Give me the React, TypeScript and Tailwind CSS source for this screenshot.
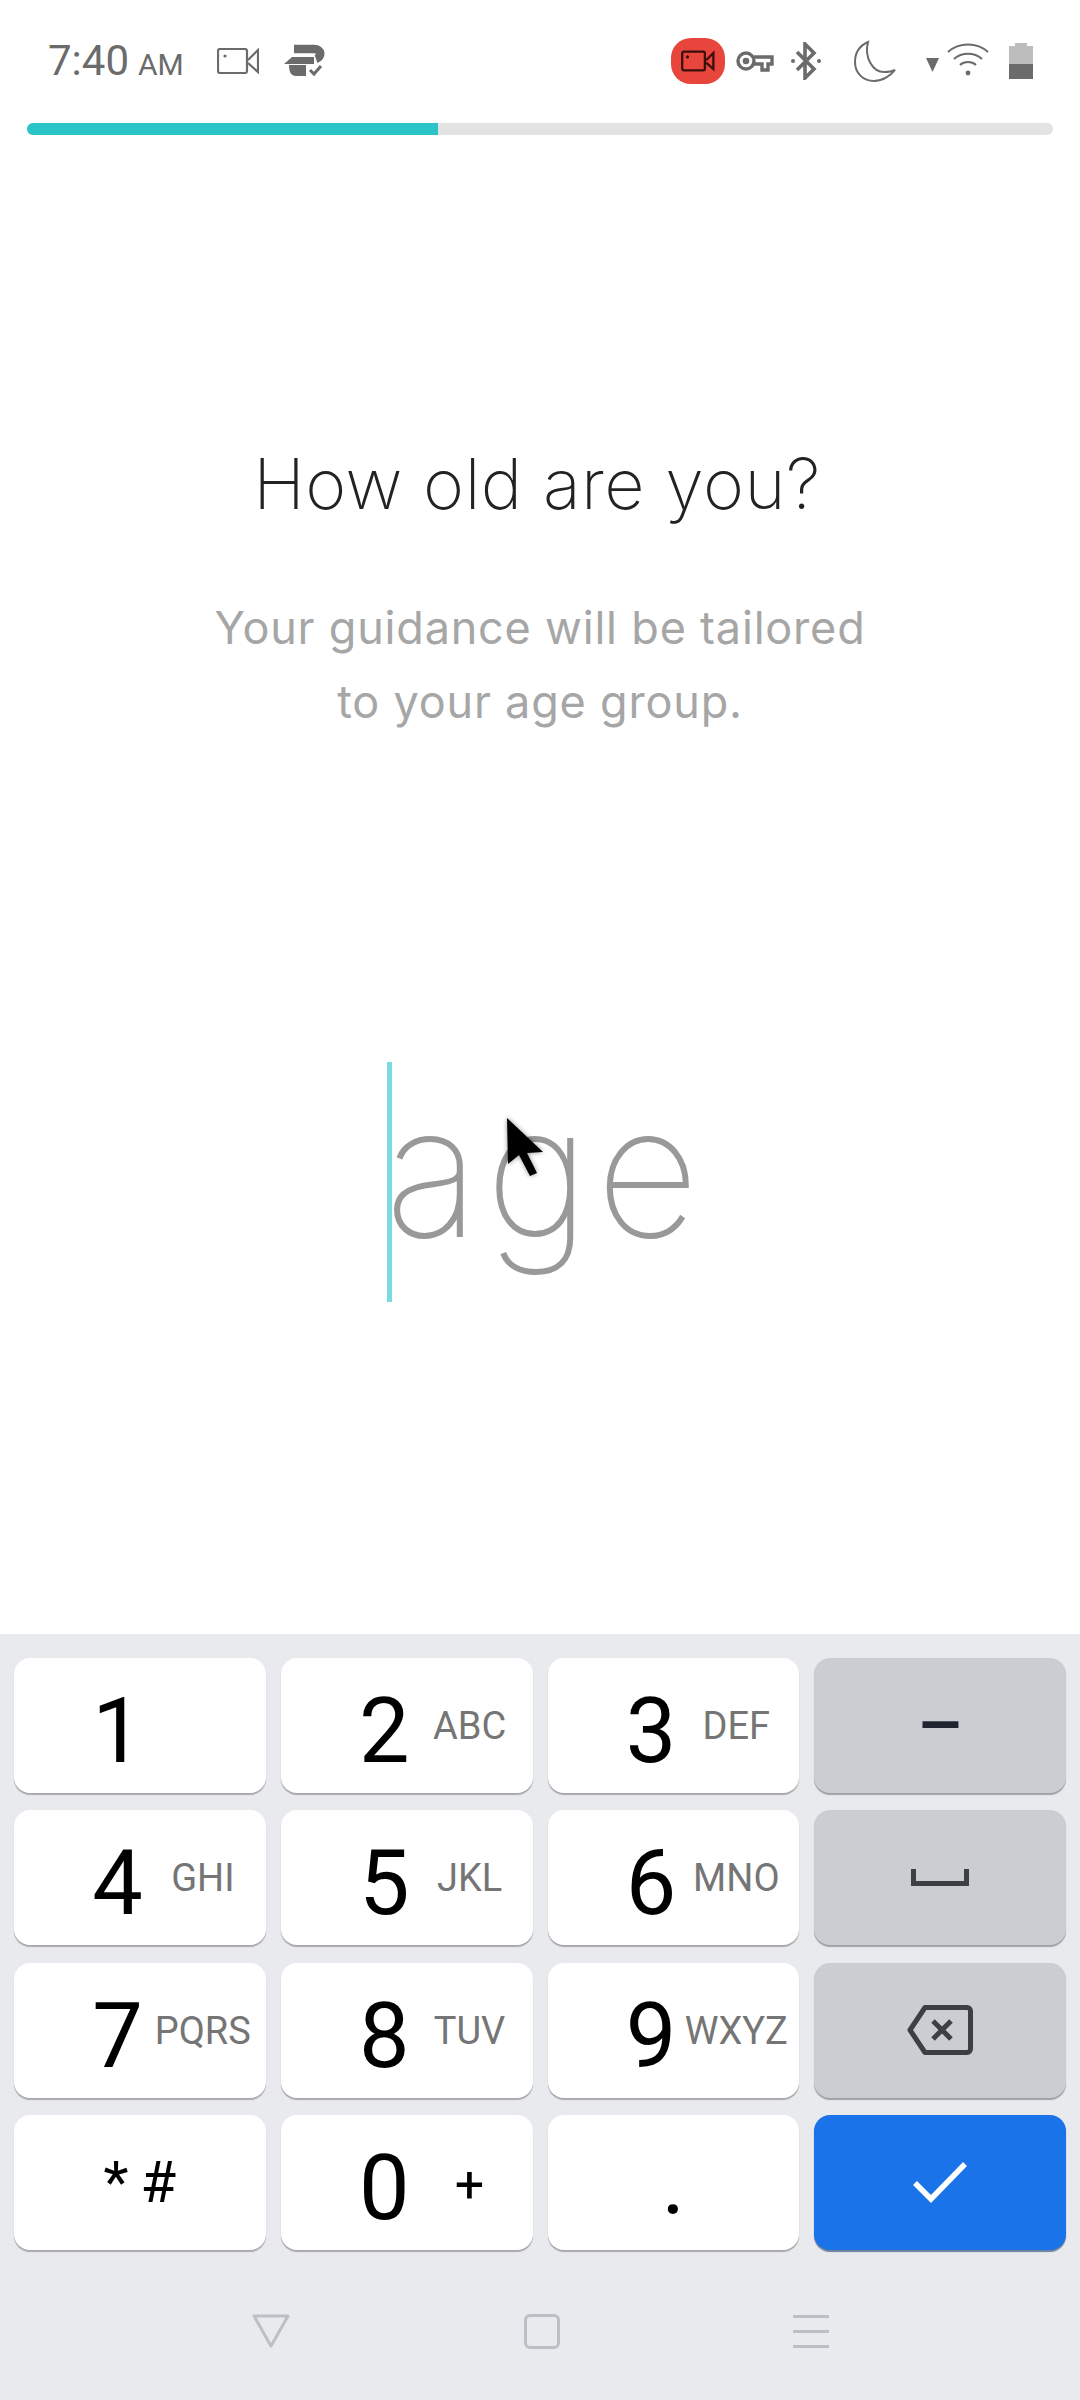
import React from "react";

const digitKeys = [
  { digit: "1", label: "" },
  { digit: "2", label: "ABC" },
  { digit: "3", label: "DEF" },
  { digit: "4", label: "GHI" },
  { digit: "5", label: "JKL" },
  { digit: "6", label: "MNO" },
  { digit: "7", label: "PQRS" },
  { digit: "8", label: "TUV" },
  { digit: "9", label: "WXYZ" },
];

const DigitKey = ({ digit, label, mark }: { digit: string; label: string; mark?: string }) => (
  <div className="grid grid-cols-2 h-[135px] rounded-2xl bg-white shadow-[0_2px_1px_#a9a9ad] items-center">
    <span className="text-right text-[90px] leading-none text-black pt-[13px] mr-[-3px]">{digit}</span>
    {mark ? (
      <span className="text-center text-[52px] leading-none text-black pt-[6px]">{mark}</span>
    ) : (
      <span className="text-center text-[38px] leading-none text-[#757575] whitespace-nowrap pt-[1px]">{label}</span>
    )}
  </div>
);

const StatusBar = () => (
  <div className="flex items-center h-[123px] pb-[2px] pl-[48px] text-[#6b6b6b]">
    <span className="text-[42px] leading-none">7:40</span>
    <span className="text-[30px] leading-none ml-[9px] mt-[8px]">AM</span>
    <svg className="ml-[33px]" width="42" height="26" viewBox="0 0 42 26" fill="none" stroke="currentColor" strokeWidth="2.2">
      <rect x="1" y="1" width="29" height="24" rx="2" />
      <path d="M31 12 41 2v22L31 15" />
      <circle cx="8" cy="8" r="1.6" fill="currentColor" stroke="none" />
    </svg>
    <svg className="ml-[25px]" width="42" height="34" viewBox="0 0 42 34" fill="none">
      <path d="M10 5h20c8 0 8 8 2 10" stroke="currentColor" strokeWidth="8.500" />
      <path d="M0 20 8 13h22v7z" fill="currentColor" />
      <path d="M5 21h17v11H12c-5 0-7-4-7-11z" fill="currentColor" />
      <path d="M26 26l4 4 7-8" stroke="currentColor" strokeWidth="3" />
    </svg>
    <div className="ml-auto flex items-center pr-[47px]">
      <div className="flex items-center justify-center w-[54px] h-[46px] rounded-[20px] bg-[#e8453c]">
        <svg width="34" height="24" viewBox="0 0 42 26" fill="none" stroke="#3a0f0c" strokeWidth="2.8">
          <rect x="1.5" y="1.5" width="28" height="23" rx="2" />
          <path d="M31 12 40 3v20l-9-8" />
          <circle cx="8" cy="8" r="2" fill="#3a0f0c" stroke="none" />
        </svg>
      </div>
      <svg className="ml-[11px]" width="38" height="22" viewBox="0 0 38 22" fill="none" stroke="currentColor" strokeWidth="3.4">
        <circle cx="10" cy="11" r="8" />
        <path d="M18 7h18v7h-4v6h-6v-6h-8" />
        <circle cx="10" cy="11" r="1.6" fill="currentColor" />
      </svg>
      <svg className="ml-[16px]" width="32" height="38" viewBox="0 0 32 38" fill="none" stroke="currentColor" strokeWidth="3.6">
        <path d="M7 10 24 27 15 36V2l9 9L7 28" />
        <circle cx="3" cy="19" r="2" fill="currentColor" stroke="none" />
        <circle cx="29" cy="19" r="2" fill="currentColor" stroke="none" />
      </svg>
      <svg className="ml-[32px]" width="42" height="42" viewBox="0 0 42 42" fill="none" stroke="currentColor" strokeWidth="2">
        <path d="M14 2C5 6 1 14 1 22c0 11 8 19 19 19 9 0 17-6 21-11-4 2-8 2-11 2C19 32 10 18 14 2z" />
      </svg>
      <svg className="ml-[30px] mt-[8px]" width="13" height="14" viewBox="0 0 13 14" fill="currentColor">
        <path d="M0 0h13L6.5 14z" />
      </svg>
      <svg className="ml-[8px] mt-[-2px]" width="42" height="33" viewBox="0 0 42 33" fill="none" stroke="currentColor" strokeWidth="2">
        <path d="M1 9c11-10 29-10 40 0" />
        <path d="M7 16c8-7 20-7 28 0" />
        <path d="M13 22c4-4 12-4 16 0" />
        <circle cx="21" cy="30" r="2.400" fill="currentColor" stroke="none" />
      </svg>
      <div className="ml-[20px] flex flex-col items-center">
        <div className="w-[12px] h-[3px] bg-[#bdbdbd]" />
        <div className="w-[24px] h-[18px] bg-[#bdbdbd]" />
        <div className="w-[24px] h-[15px] bg-[#6b6b6b]" />
      </div>
    </div>
  </div>
);

export default function App() {
  return (
    <div className="relative flex flex-col w-[1080px] h-[2400px] bg-white overflow-hidden font-['Roboto',sans-serif]">
      <StatusBar />

      <div className="mx-[27px] h-[12px] rounded-full bg-[#e3e3e3]">
        <div className="w-[411px] h-full rounded-l-full bg-[#2bc4c9]" />
      </div>

      <main className="flex-1 flex flex-col items-center font-['Inter',sans-serif]">
        <h1 className="mt-[309px] mr-[6px] text-[70px] leading-[80px] font-extralight tracking-[0.5px] text-[#222222]">How old are you?</h1>
        <p className="mt-[67px] text-center text-[45px] leading-[74px] tracking-[0.8px] text-[#a6a6a6]">
          Your guidance will be tailored
          <br />
          to your age group.
        </p>
        <div className="mt-[313px] ml-[12px] flex items-center">
          <div className="w-[5px] h-[240px] bg-[#7adbe5]" />
          <span className="ml-[-6px] mb-[19px] text-[178px] leading-[240px] font-thin tracking-[7px] text-[#999999] [-webkit-text-stroke:2px_#999999]">age</span>
        </div>
      </main>

      <section className="bg-[#e8eaed] h-[766px]">
        <div className="grid grid-cols-4 gap-x-[15px] gap-y-[17.3px] px-[14px] pt-[24px]">
          {digitKeys.slice(0, 3).map((k) => (
            <DigitKey key={k.digit} {...k} />
          ))}
          <div className="flex items-center justify-center h-[135px] rounded-2xl bg-[#cbcdd2] shadow-[0_2px_1px_#a0a1a6] text-[72px] leading-none font-medium text-[#1f2430]">
            –
          </div>
          {digitKeys.slice(3, 6).map((k) => (
            <DigitKey key={k.digit} {...k} />
          ))}
          <div className="flex items-center justify-center h-[135px] rounded-2xl bg-[#cbcdd2] shadow-[0_2px_1px_#a0a1a6]">
            <svg width="58" height="17" viewBox="0 0 58 17" fill="none" stroke="#3c4043" strokeWidth="5">
              <path d="M2.500 0v14.500h53V0" />
            </svg>
          </div>
          {digitKeys.slice(6, 9).map((k) => (
            <DigitKey key={k.digit} {...k} />
          ))}
          <div className="flex items-center justify-center h-[135px] rounded-2xl bg-[#cbcdd2] shadow-[0_2px_1px_#a0a1a6]">
            <svg width="66" height="50" viewBox="0 0 66 50" fill="none" stroke="#3c4043" strokeWidth="5" strokeLinejoin="round">
              <path d="M18 2.500h42a3.500 3.500 0 0 1 3.500 3.500v38a3.500 3.500 0 0 1-3.500 3.500H18L3 25z" />
              <path d="M26 16l18 18M44 16 26 34" />
            </svg>
          </div>
          <div className="flex items-center justify-center h-[135px] rounded-2xl bg-white shadow-[0_2px_1px_#a9a9ad] text-[58px] leading-none text-black">
            <span>*</span>
            <span className="ml-[12px]">#</span>
          </div>
          <DigitKey digit="0" label="" mark="+" />
          <div className="flex items-end justify-center h-[135px] pb-[22px] rounded-2xl bg-white shadow-[0_2px_1px_#a9a9ad] text-[90px] leading-none text-black">
            .
          </div>
          <div className="flex items-center justify-center h-[135px] rounded-2xl bg-[#1a73e8] shadow-[0_2px_1px_#6a7f9c]">
            <svg width="54" height="42" viewBox="0 0 54 42" fill="none" stroke="#ffffff" strokeWidth="5.500">
              <path d="M2 22l16 16L52 3" />
            </svg>
          </div>
        </div>

        <nav className="flex items-center justify-center gap-[233px] mt-[64px] text-[#bdbfc4]">
          <svg width="40" height="34" viewBox="0 0 40 34" fill="none" stroke="currentColor" strokeWidth="3" strokeLinejoin="round">
            <path d="M3 2h34L20 32z" />
          </svg>
          <div className="w-[36px] h-[35px] rounded-md border-[3px] border-current" />
          <div className="flex flex-col gap-[12px] w-[36px]">
            <div className="h-[3px] bg-current" />
            <div className="h-[3px] bg-current" />
            <div className="h-[3px] bg-current" />
          </div>
        </nav>
      </section>

      <svg className="absolute left-[503px] top-[1114px]" width="48" height="68" viewBox="0 0 48 68">
        <defs>
          <filter id="cursor-shadow" x="-30%" y="-30%" width="160%" height="160%">
            <feDropShadow dx="0" dy="0" stdDeviation="2.500" floodColor="#000000" floodOpacity="0.45" />
          </filter>
        </defs>
        <path d="M4 4 40 38 24 39 34 59 27 62 16 41 5 50z" fill="#000000" filter="url(#cursor-shadow)" />
      </svg>
    </div>
  );
}
